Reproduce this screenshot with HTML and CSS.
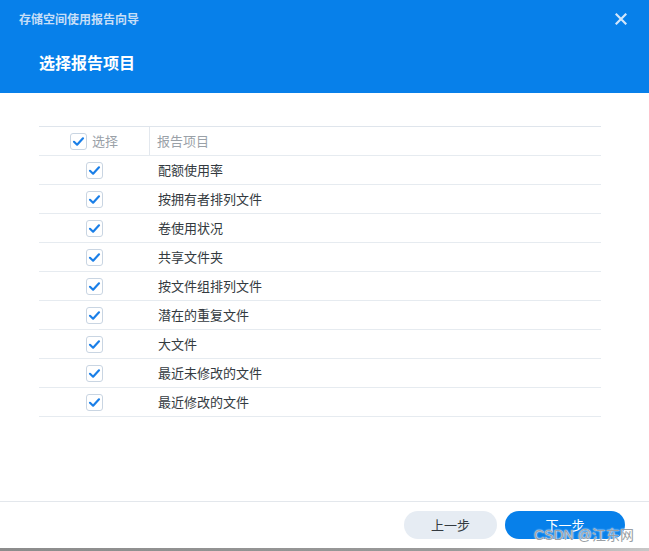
FILE: index.html
```html
<!DOCTYPE html>
<html lang="zh">
<head>
<meta charset="utf-8">
<link rel="stylesheet" href="styles.css">
</head>
<body>
<div class="dialog">
  <header class="head">
    <div class="topbar">
      <span class="wintitle">存储空间使用报告向导</span>
      <svg class="close" width="12" height="12" viewBox="0 0 12 12"><path d="M1.5 1.5 L10.5 10.5 M10.5 1.5 L1.5 10.5" stroke="#d2e6fb" stroke-width="2.2" stroke-linecap="square"/></svg>
    </div>
    <h1 class="step">选择报告项目</h1>
  </header>
  <main class="content">
    <div class="table">
      <div class="row hrow">
        <div class="c1"><span class="cb"><svg viewBox="0 0 16 16"><path d="M3.2 8.3 L6.5 11.4 L12.8 4.6" fill="none" stroke="#1a7fe8" stroke-width="2.3" stroke-linecap="round" stroke-linejoin="round"/></svg></span><span class="hl">选择</span></div>
        <div class="c2 ht">报告项目</div>
      </div>
      <div class="row"><div class="c1"><span class="cb"><svg viewBox="0 0 16 16"><path d="M3.2 8.3 L6.5 11.4 L12.8 4.6" fill="none" stroke="#1a7fe8" stroke-width="2.3" stroke-linecap="round" stroke-linejoin="round"/></svg></span></div><div class="c2">配额使用率</div></div>
      <div class="row"><div class="c1"><span class="cb"><svg viewBox="0 0 16 16"><path d="M3.2 8.3 L6.5 11.4 L12.8 4.6" fill="none" stroke="#1a7fe8" stroke-width="2.3" stroke-linecap="round" stroke-linejoin="round"/></svg></span></div><div class="c2">按拥有者排列文件</div></div>
      <div class="row"><div class="c1"><span class="cb"><svg viewBox="0 0 16 16"><path d="M3.2 8.3 L6.5 11.4 L12.8 4.6" fill="none" stroke="#1a7fe8" stroke-width="2.3" stroke-linecap="round" stroke-linejoin="round"/></svg></span></div><div class="c2">卷使用状况</div></div>
      <div class="row"><div class="c1"><span class="cb"><svg viewBox="0 0 16 16"><path d="M3.2 8.3 L6.5 11.4 L12.8 4.6" fill="none" stroke="#1a7fe8" stroke-width="2.3" stroke-linecap="round" stroke-linejoin="round"/></svg></span></div><div class="c2">共享文件夹</div></div>
      <div class="row"><div class="c1"><span class="cb"><svg viewBox="0 0 16 16"><path d="M3.2 8.3 L6.5 11.4 L12.8 4.6" fill="none" stroke="#1a7fe8" stroke-width="2.3" stroke-linecap="round" stroke-linejoin="round"/></svg></span></div><div class="c2">按文件组排列文件</div></div>
      <div class="row"><div class="c1"><span class="cb"><svg viewBox="0 0 16 16"><path d="M3.2 8.3 L6.5 11.4 L12.8 4.6" fill="none" stroke="#1a7fe8" stroke-width="2.3" stroke-linecap="round" stroke-linejoin="round"/></svg></span></div><div class="c2">潜在的重复文件</div></div>
      <div class="row"><div class="c1"><span class="cb"><svg viewBox="0 0 16 16"><path d="M3.2 8.3 L6.5 11.4 L12.8 4.6" fill="none" stroke="#1a7fe8" stroke-width="2.3" stroke-linecap="round" stroke-linejoin="round"/></svg></span></div><div class="c2">大文件</div></div>
      <div class="row"><div class="c1"><span class="cb"><svg viewBox="0 0 16 16"><path d="M3.2 8.3 L6.5 11.4 L12.8 4.6" fill="none" stroke="#1a7fe8" stroke-width="2.3" stroke-linecap="round" stroke-linejoin="round"/></svg></span></div><div class="c2">最近未修改的文件</div></div>
      <div class="row"><div class="c1"><span class="cb"><svg viewBox="0 0 16 16"><path d="M3.2 8.3 L6.5 11.4 L12.8 4.6" fill="none" stroke="#1a7fe8" stroke-width="2.3" stroke-linecap="round" stroke-linejoin="round"/></svg></span></div><div class="c2">最近修改的文件</div></div>
    </div>
  </main>
  <footer class="foot">
    <button class="btn prev">上一步</button>
    <button class="btn next">下一步</button>
    <span class="wm">CSDN @江东网</span>
  </footer>
</div>
</body>
</html>
```

FILE: styles.css
```css
* { box-sizing: border-box; }
html, body { margin: 0; padding: 0; }
body {
  width: 649px;
  height: 551px;
  background: #ffffff;
  font-family: "Noto Sans CJK SC", "Noto Sans", sans-serif;
  overflow: hidden;
}
.dialog {
  width: 649px;
  height: 551px;
  display: flex;
  flex-direction: column;
  background: #ffffff;
  border-bottom: 3px solid;
  border-image: linear-gradient(to right, #8c8c8c, #9a9a9a 70%, #c8c8c8) 1;
}
.head {
  height: 93px;
  background: #0780ea;
  flex: none;
}
.topbar {
  height: 37px;
  display: flex;
  align-items: center;
  justify-content: space-between;
  padding: 0 22px 0 19px;
}
.wintitle {
  font-size: 12px;
  font-weight: 700;
  color: #c6def7;
  line-height: 16px;
}
.close { display: block; }
.step {
  margin: 14px 0 0 39px;
  font-size: 16px;
  font-weight: 700;
  color: #ffffff;
  line-height: 22px;
}
.content {
  flex: 1;
  padding: 33px 48px 0 39px;
}
.table {
  border-top: 1px solid #dfe5ec;
}
.row {
  display: flex;
  height: 29px;
  border-bottom: 1px solid #e6ebf0;
  align-items: center;
}
.c1 {
  width: 111px;
  height: 100%;
  display: flex;
  align-items: center;
  justify-content: center;
  flex: none;
}
.hrow .c1 {
  border-right: 1px solid #e3e8ee;
  justify-content: flex-start;
  padding-left: 31px;
  height: 28px;
}
.c2 {
  padding-left: 8px;
  font-size: 13px;
  color: #333a40;
  line-height: 18px;
}
.hrow .c2 { padding-left: 7px; }
.ht { color: #9aa1a8; }
.hl {
  font-size: 13px;
  color: #9aa1a8;
  margin-left: 5px;
  line-height: 18px;
}
.cb {
  width: 17px;
  height: 17px;
  border: 1px solid #c9d5e2;
  border-radius: 3px;
  background: #ffffff;
  display: flex;
  align-items: center;
  justify-content: center;
}
.cb svg { width: 15px; height: 15px; display: block; }
.foot {
  position: relative;
  flex: none;
  height: 47px;
  border-top: 1px solid #e3e7ec;
  display: flex;
  justify-content: flex-end;
  align-items: flex-start;
  gap: 8px;
  padding: 9px 24px 0 0;
}
.btn {
  height: 28px;
  border: none;
  border-radius: 14px;
  font-family: "Noto Sans CJK SC", "Noto Sans", sans-serif;
  font-size: 13px;
  padding: 0;
  line-height: 28px;
}
.prev { width: 93px; background: #e6ecf3; color: #333a40; }
.next { width: 120px; background: #0780ea; color: #ffffff; }
.wm {
  position: absolute;
  right: 15px;
  top: 25px;
  font-family: "Liberation Sans", "Noto Sans CJK SC", sans-serif;
  font-size: 14px;
  color: #9a9fa5;
  text-shadow: 0 0 2px #fff, 0 0 1px #fff;
  line-height: 17px;
}
```
